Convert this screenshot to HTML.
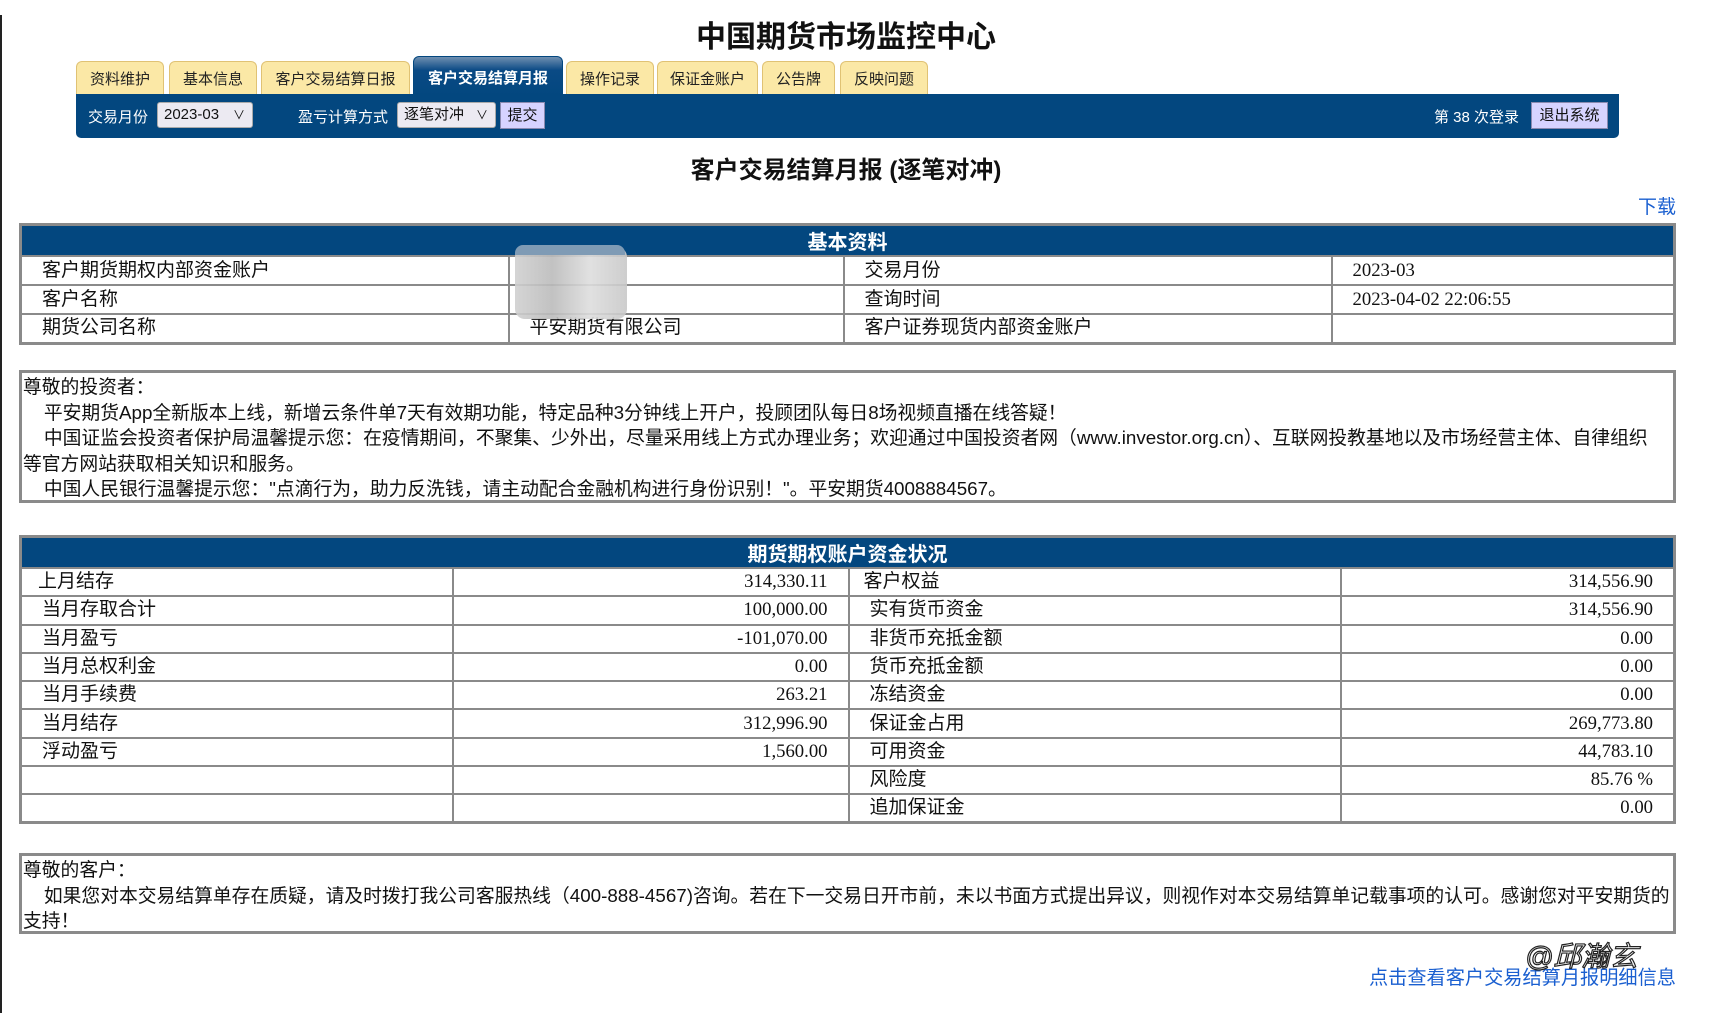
<!DOCTYPE html>
<html><head><meta charset="utf-8">
<style>
*{margin:0;padding:0;box-sizing:border-box}
body{width:1712px;height:1013px;background:#fff;position:relative;overflow:hidden;font-family:"Liberation Sans","Noto Sans CJK SC",sans-serif;color:#111}
.abs{position:absolute}
.lbar{left:0;top:15px;width:2px;height:998px;background:#222}
.title{left:0;width:1692px;top:18px;text-align:center;font-size:30px;font-weight:bold;line-height:40px}
.tab{position:absolute;top:61px;height:34px;background:#fbe8a6;border:1px solid #e0c274;border-bottom:none;border-radius:6px 6px 0 0;font-size:15px;text-align:center;line-height:36px;color:#222}
.tab.act{top:56px;height:39px;background:linear-gradient(#6f8fb0,#0a4a85 35%,#03477f);border-color:#03477f;color:#fff;font-weight:bold;line-height:44px}
.nav{left:76px;top:94px;width:1543px;height:44px;background:#03477f;border-radius:0 0 5px 5px;color:#fff;font-size:15px}
.nav span{position:absolute;top:12px}
.sel{position:absolute;top:8px;height:26px;background:#eceaf2;border:1px solid #aaa;border-radius:3px;color:#111;font-size:15px;line-height:24px;padding-left:6px}
.sel i{position:absolute;right:7px;top:0;font-style:normal;font-size:12px}
.btn{position:absolute;top:8px;height:27px;background:#d6d3ff;border:1px solid #8a8ab0;color:#111;font-size:15px;line-height:25px;text-align:center}
.sub{left:0;width:1692px;top:150px;text-align:center;font-size:24px;font-weight:bold}
.link{color:#1a5fd0;font-size:19px}
table{position:absolute;border-collapse:collapse;table-layout:fixed;border:3px solid #8a8a8a;font-size:19px}
td{border:2px solid #8a8a8a;padding:0 0 0 20px;white-space:nowrap;overflow:hidden;line-height:24px}
th{background:#03477f;color:#fff;font-size:20px;font-weight:bold;border:2px solid #8a8a8a}
td.n{text-align:right;padding:0 20px 0 0;font-family:"Liberation Serif",serif;font-size:18.7px}
td.d{font-family:"Liberation Serif",serif;font-size:18.7px}
.box{border:3px solid #8a8a8a;font-size:18.8px;line-height:25.5px;padding:1px 14px 0 1px}
</style></head><body>
<div class="abs lbar"></div>
<div class="abs title">中国期货市场监控中心</div>
<div class="tab" style="left:76px;width:88px">资料维护</div>
<div class="tab" style="left:169px;width:88px">基本信息</div>
<div class="tab" style="left:261px;width:149px">客户交易结算日报</div>
<div class="tab act" style="left:413px;width:150px">客户交易结算月报</div>
<div class="tab" style="left:566px;width:88px">操作记录</div>
<div class="tab" style="left:657px;width:101px">保证金账户</div>
<div class="tab" style="left:762px;width:73px">公告牌</div>
<div class="tab" style="left:840px;width:88px">反映问题</div>
<div class="abs nav">
<span style="left:12px">交易月份</span>
<div class="sel" style="left:81px;width:96px">2023-03<i>∨</i></div>
<span style="left:222px">盈亏计算方式</span>
<div class="sel" style="left:321px;width:99px">逐笔对冲<i>∨</i></div>
<div class="btn" style="left:424px;width:45px">提交</div>
<span style="left:1358px">第 38 次登录</span>
<div class="btn" style="left:1455px;width:77px">退出系统</div>
</div>
<div class="abs sub">客户交易结算月报 (逐笔对冲)</div>
<div class="abs link" style="left:1638px;top:192px">下载</div>

<table style="left:19px;top:223px;width:1657px">
<colgroup><col style="width:488px"><col style="width:335px"><col style="width:488px"><col></colgroup>
<tr style="height:28px"><th colspan="4">基本资料</th></tr>
<tr style="height:29px"><td>客户期货期权内部资金账户</td><td></td><td>交易月份</td><td class="d">2023-03</td></tr>
<tr style="height:29px"><td>客户名称</td><td></td><td>查询时间</td><td class="d">2023-04-02 22:06:55</td></tr>
<tr style="height:29px"><td>期货公司名称</td><td>平安期货有限公司</td><td>客户证券现货内部资金账户</td><td></td></tr>
</table>
<div class="abs" style="left:515px;top:247px;width:112px;height:72px;background:linear-gradient(90deg,#d0d0d0,#bbb,#ddd,#c8c8c8);opacity:.9;border-radius:10px"></div>
<div class="abs" style="left:515px;top:245px;width:110px;height:10px;background:#7f9bb5;border-radius:8px 8px 0 0"></div>

<div class="abs box" style="left:19px;top:370px;width:1657px;height:133px">
尊敬的投资者：<br>
&nbsp;&nbsp;&nbsp;&nbsp;平安期货App全新版本上线，新增云条件单7天有效期功能，特定品种3分钟线上开户，投顾团队每日8场视频直播在线答疑！<br>
&nbsp;&nbsp;&nbsp;&nbsp;中国证监会投资者保护局温馨提示您：在疫情期间，不聚集、少外出，尽量采用线上方式办理业务；欢迎通过中国投资者网（www.investor.org.cn）、互联网投教基地以及市场经营主体、自律组织等官方网站获取相关知识和服务。<br>
&nbsp;&nbsp;&nbsp;&nbsp;中国人民银行温馨提示您："点滴行为，助力反洗钱，请主动配合金融机构进行身份识别！"。平安期货4008884567。
</div>

<table style="left:19px;top:535px;width:1657px">
<colgroup><col style="width:432px"><col style="width:396px"><col style="width:492px"><col></colgroup>
<tr style="height:30px"><th colspan="4">期货期权账户资金状况</th></tr>
<tr style="height:28.3px"><td style="padding-left:16px">上月结存</td><td class="n">314,330.11</td><td style="padding-left:14px">客户权益</td><td class="n">314,556.90</td></tr>
<tr style="height:28.3px"><td>当月存取合计</td><td class="n">100,000.00</td><td>实有货币资金</td><td class="n">314,556.90</td></tr>
<tr style="height:28.3px"><td>当月盈亏</td><td class="n">-101,070.00</td><td>非货币充抵金额</td><td class="n">0.00</td></tr>
<tr style="height:28.3px"><td>当月总权利金</td><td class="n">0.00</td><td>货币充抵金额</td><td class="n">0.00</td></tr>
<tr style="height:28.3px"><td>当月手续费</td><td class="n">263.21</td><td>冻结资金</td><td class="n">0.00</td></tr>
<tr style="height:28.3px"><td>当月结存</td><td class="n">312,996.90</td><td>保证金占用</td><td class="n">269,773.80</td></tr>
<tr style="height:28.3px"><td>浮动盈亏</td><td class="n">1,560.00</td><td>可用资金</td><td class="n">44,783.10</td></tr>
<tr style="height:28.3px"><td></td><td></td><td>风险度</td><td class="n">85.76 %</td></tr>
<tr style="height:28.3px"><td></td><td></td><td>追加保证金</td><td class="n">0.00</td></tr>
</table>

<div class="abs box" style="left:19px;top:853px;width:1657px;height:81px;padding-right:2px">
尊敬的客户：<br>
&nbsp;&nbsp;&nbsp;&nbsp;如果您对本交易结算单存在质疑，请及时拨打我公司客服热线（400-888-4567)咨询。若在下一交易日开市前，未以书面方式提出异议，则视作对本交易结算单记载事项的认可。感谢您对平安期货的支持！
</div>
<div class="abs link" style="left:1369px;top:962px;font-size:19.2px">点击查看客户交易结算月报明细信息</div>
<div class="abs" style="left:1525px;top:935px;font-size:28px;color:#fff;-webkit-text-stroke:1.2px #222;font-style:italic">@邱瀚玄</div>
</body></html>
